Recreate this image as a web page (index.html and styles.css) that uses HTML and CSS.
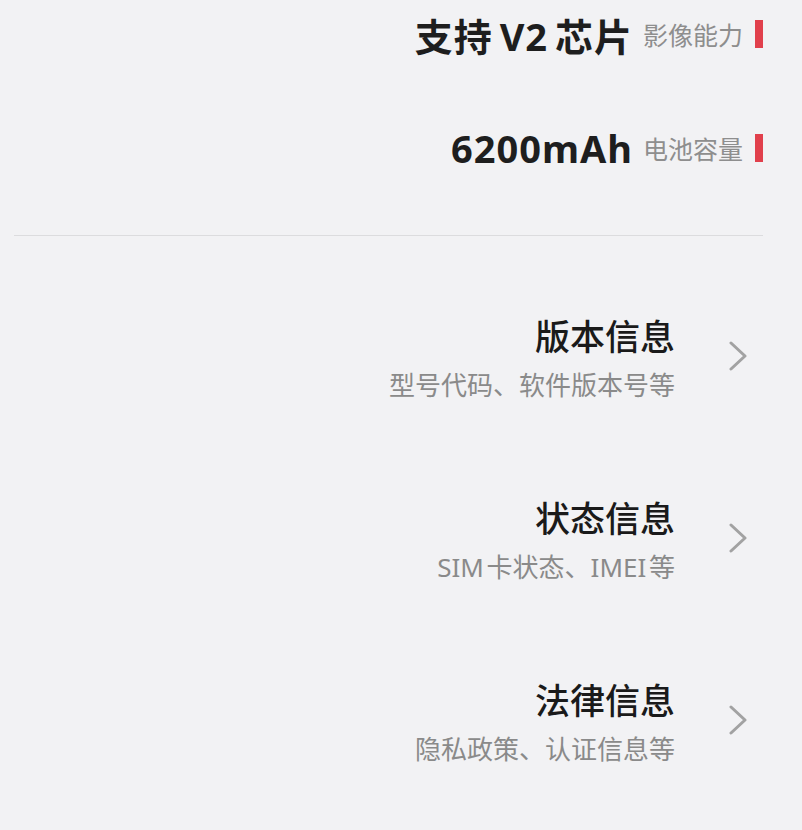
FILE: index.html
```html
<!DOCTYPE html>
<html lang="zh-CN">
<head>
  <meta charset="UTF-8" />
  <meta name="viewport" content="width=device-width, initial-scale=1.0"/>
  <title>我的设备</title>
  <link rel="stylesheet" href="styles.css">
</head>
<body>
  <div id="device">
    <div class="specs">
      <div class="spec">
        <span class="spec-value">支持 V2 芯片</span>
        <span class="spec-label">影像能力</span>
        <span class="spec-bar"></span>
      </div>
      <div class="spec">
        <span class="spec-value">6200mAh</span>
        <span class="spec-label">电池容量</span>
        <span class="spec-bar"></span>
      </div>
    </div>

    <div class="divider"></div>

    <div class="menu">
      <div class="item">
        <div class="item-text">
          <div class="item-title">版本信息</div>
          <div class="item-sub">型号代码、软件版本号等</div>
        </div>
        <svg class="chevron" viewBox="0 0 20 30" width="20" height="30">
          <polyline points="3,2 17,15 3,28" />
        </svg>
      </div>
      <div class="item">
        <div class="item-text">
          <div class="item-title">状态信息</div>
          <div class="item-sub">SIM 卡状态、IMEI 等</div>
        </div>
        <svg class="chevron" viewBox="0 0 20 30" width="20" height="30">
          <polyline points="3,2 17,15 3,28" />
        </svg>
      </div>
      <div class="item">
        <div class="item-text">
          <div class="item-title">法律信息</div>
          <div class="item-sub">隐私政策、认证信息等</div>
        </div>
        <svg class="chevron" viewBox="0 0 20 30" width="20" height="30">
          <polyline points="3,2 17,15 3,28" />
        </svg>
      </div>
    </div>
  </div>
</body>
</html>
```

FILE: styles.css
```css
* {
  box-sizing: border-box;
}
body {
  margin: 0;
  padding: 0;
  background: #f2f2f4;
  font-family: "Noto Sans", "Noto Sans CJK SC", sans-serif;
  color: #1c1c1c;
  overflow: hidden;
}

#device {
  width: 802px;
  height: 830px;
}

/* top spec rows */
.specs {
  padding: 4px 39px 0 0;
  display: flex;
  flex-direction: column;
  gap: 54px;
}

.spec {
  height: 60px;
  display: flex;
  justify-content: flex-end;
  align-items: center;
}

.spec-value {
  font-size: 38px;
  font-weight: 700;
  letter-spacing: 1px;
  word-spacing: -4px;
  color: #1e1e1e;
}

.spec-label {
  margin-left: 10px;
  font-size: 25px;
  color: #8e8e8e;
}

.spec-bar {
  margin-left: 12px;
  width: 8px;
  height: 28px;
  background-color: #e1404c;
}

.divider {
  margin: 57px 39px 0 14px;
  height: 1px;
  background-color: #dcdcde;
}

/* menu entries */
.menu {
  padding: 34px 54px 0 0;
}

.item {
  height: 182px;
  display: flex;
  justify-content: flex-end;
  align-items: center;
}

.item-text {
  text-align: right;
}

.item-title {
  font-size: 35px;
  font-weight: 500;
  line-height: 48px;
  color: #1a1a1a;
}

.item-sub {
  font-size: 26px;
  line-height: 48px;
  word-spacing: -4px;
  color: #8a8a8a;
}

.chevron {
  margin-left: 53px;
  margin-bottom: 10px;
  fill: none;
  stroke: #a2a2a2;
  stroke-width: 3;
  stroke-linecap: round;
  stroke-linejoin: round;
}
```
